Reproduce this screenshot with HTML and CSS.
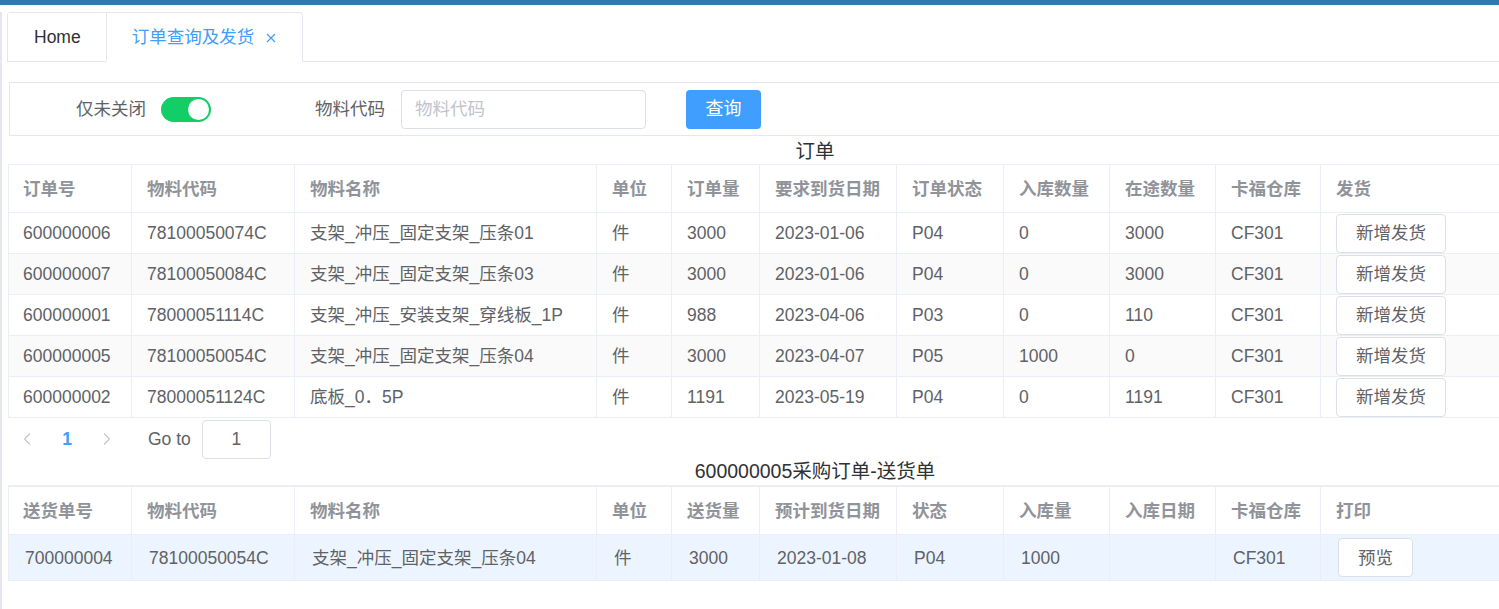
FILE: index.html
```html
<!DOCTYPE html>
<html lang="zh-CN">
<head>
<meta charset="utf-8">
<title>订单查询及发货</title>
<link rel="stylesheet" href="styles.css">
</head>
<body>
<div class="topbar"></div>
<div class="page">
  <div class="tabs">
    <div class="tab-nav">
      <div class="tab">Home</div>
      <div class="tab active">订单查询及发货<svg class="close" width="10" height="10" viewBox="0 0 10 10"><path d="M1 1 L9 9 M9 1 L1 9" stroke="#409eff" stroke-width="1.2" fill="none"/></svg></div>
    </div>
  </div>

  <div class="filter">
    <span class="label first">仅未关闭</span>
    <span class="switch"><span class="knob"></span></span>
    <span class="label second">物料代码</span>
    <span class="input">物料代码</span>
    <span class="btn-primary">查询</span>
  </div>

  <div class="title">订单</div>
  <table class="grid">
    <colgroup>
      <col class="c1"><col class="c2"><col class="c3"><col class="c4"><col class="c5"><col class="c6"><col class="c7"><col class="c8"><col class="c9"><col class="c10"><col class="c11">
    </colgroup>
    <thead>
      <tr><th>订单号</th><th>物料代码</th><th>物料名称</th><th>单位</th><th>订单量</th><th>要求到货日期</th><th>订单状态</th><th>入库数量</th><th>在途数量</th><th>卡福仓库</th><th>发货</th></tr>
    </thead>
    <tbody>
      <tr><td>600000006</td><td>78100050074C</td><td>支架_冲压_固定支架_压条01</td><td>件</td><td>3000</td><td>2023-01-06</td><td>P04</td><td>0</td><td>3000</td><td>CF301</td><td><span class="btn">新增发货</span></td></tr>
      <tr class="stripe"><td>600000007</td><td>78100050084C</td><td>支架_冲压_固定支架_压条03</td><td>件</td><td>3000</td><td>2023-01-06</td><td>P04</td><td>0</td><td>3000</td><td>CF301</td><td><span class="btn">新增发货</span></td></tr>
      <tr><td>600000001</td><td>78000051114C</td><td>支架_冲压_安装支架_穿线板_1P</td><td>件</td><td>988</td><td>2023-04-06</td><td>P03</td><td>0</td><td>110</td><td>CF301</td><td><span class="btn">新增发货</span></td></tr>
      <tr class="stripe"><td>600000005</td><td>78100050054C</td><td>支架_冲压_固定支架_压条04</td><td>件</td><td>3000</td><td>2023-04-07</td><td>P05</td><td>1000</td><td>0</td><td>CF301</td><td><span class="btn">新增发货</span></td></tr>
      <tr><td>600000002</td><td>78000051124C</td><td>底板_0．5P</td><td>件</td><td>1191</td><td>2023-05-19</td><td>P04</td><td>0</td><td>1191</td><td>CF301</td><td><span class="btn">新增发货</span></td></tr>
    </tbody>
  </table>

  <div class="pager">
    <span class="pg-btn"><svg width="8" height="12" viewBox="0 0 8 12"><path d="M7 0.5 L1.5 6 L7 11.5" stroke="#c0c4cc" stroke-width="1.1" fill="none"/></svg></span>
    <span class="pg-btn pg-num">1</span>
    <span class="pg-btn"><svg width="8" height="12" viewBox="0 0 8 12"><path d="M1 0.5 L6.5 6 L1 11.5" stroke="#c0c4cc" stroke-width="1.1" fill="none"/></svg></span>
    <span class="goto">Go to</span>
    <span class="goto-input">1</span>
  </div>

  <div class="title title2">600000005采购订单-送货单</div>
  <table class="grid grid2">
    <colgroup>
      <col class="c1"><col class="c2"><col class="c3"><col class="c4"><col class="c5"><col class="c6"><col class="c7"><col class="c8"><col class="c9"><col class="c10"><col class="c11">
    </colgroup>
    <thead>
      <tr><th>送货单号</th><th>物料代码</th><th>物料名称</th><th>单位</th><th>送货量</th><th>预计到货日期</th><th>状态</th><th>入库量</th><th>入库日期</th><th>卡福仓库</th><th>打印</th></tr>
    </thead>
    <tbody>
      <tr class="current"><td>700000004</td><td>78100050054C</td><td>支架_冲压_固定支架_压条04</td><td>件</td><td>3000</td><td>2023-01-08</td><td>P04</td><td>1000</td><td></td><td>CF301</td><td><span class="btn btn-small">预览</span></td></tr>
    </tbody>
  </table>
</div>
</body>
</html>
```

FILE: styles.css
```css
html, body {
  margin: 0;
  padding: 0;
  background: #fff;
  overflow: hidden;
}
body {
  font-family: "Liberation Sans", "Noto Sans CJK SC", sans-serif;
  font-size: 17.5px;
  line-height: 20px;
  color: #606266;
  width: 1499px;
  height: 609px;
}
.topbar {
  height: 5px;
  background: #317aa9;
}
.page {
  border-left: 2px solid #e4e7ed;
  padding-left: 5px;
  height: 604px;
  box-sizing: border-box;
}

/* tabs */
.tabs {
  margin-top: 7px;
  display: flex;
  border-bottom: 1px solid #e4e7ed;
  height: 49px;
  margin-right: -10px;
}
.tab-nav {
  display: flex;
  border: 1px solid #e4e7ed;
  border-bottom: none;
  border-radius: 4px 4px 0 0;
  height: 49px;
  box-sizing: border-box;
}
.tab {
  height: 47px;
  padding: 0 25px 0 26px;
  color: #303133;
  background: #fff;
  display: flex;
  align-items: center;
  white-space: nowrap;
}
.tab.active {
  border-left: 1px solid #e4e7ed;
  border-bottom: 2px solid #fff;
  border-radius: 0 4px 0 0;
  color: #409eff;
  padding: 0 26px 0 25px;
}
.close {
  margin-left: 12px;
  margin-top: 2px;
}

/* filter */
.filter {
  margin-top: 20px;
  margin-left: 2px;
  width: 1614px;
  height: 54px;
  box-sizing: border-box;
  border: 1px solid #e4e7ed;
  display: flex;
  align-items: center;
  padding-left: 66px;
}
.label {
  color: #606266;
  white-space: nowrap;
}
.label.first {
  width: 70px;
}
.switch {
  margin-left: 15px;
  width: 50px;
  height: 25px;
  border-radius: 13px;
  background: #13ce66;
  display: flex;
  align-items: center;
  justify-content: flex-end;
  padding-right: 2px;
  box-sizing: border-box;
}
.knob {
  width: 21px;
  height: 21px;
  border-radius: 50%;
  background: #fff;
}
.label.second {
  margin-left: 104px;
  width: 72px;
}
.input {
  margin-left: 14px;
  width: 245px;
  height: 39px;
  box-sizing: border-box;
  border: 1px solid #dcdfe6;
  border-radius: 4px;
  color: #c0c4cc;
  display: flex;
  align-items: center;
  padding-left: 13px;
}
.btn-primary {
  margin-left: 40px;
  width: 75px;
  height: 39px;
  border-radius: 4px;
  background: #409eff;
  color: #fff;
  display: flex;
  align-items: center;
  justify-content: center;
  font-size: 18px;
}

/* titles */
.title {
  width: 1614px;
  text-align: center;
  color: #303133;
  font-size: 19.5px;
  height: 28px;
  line-height: 30px;
  margin-left: 1px;
}
.title2 {
  height: 26px;
  line-height: 25px;
}

/* tables */
.grid {
  margin-left: 1px;
  width: 1614px;
  table-layout: fixed;
  border-collapse: collapse;
  border-left: 1px solid #ebeef5;
  border-top: 1px solid #ebeef5;
}
.c1 { width: 123px; }
.c2 { width: 163px; }
.c3 { width: 302px; }
.c4 { width: 75px; }
.c5 { width: 88px; }
.c6 { width: 137px; }
.c7 { width: 107px; }
.c8 { width: 106px; }
.c9 { width: 106px; }
.c10 { width: 105px; }
.c11 { width: 302px; }
.grid th, .grid td {
  border-right: 1px solid #ebeef5;
  border-bottom: 1px solid #ebeef5;
  padding: 0 15px;
  line-height: 20px;
  text-align: left;
  white-space: nowrap;
  overflow: hidden;
  vertical-align: middle;
}
.grid th:first-child, .grid td:first-child {
  padding-left: 14px;
}
.grid th {
  height: 47px;
  color: #909399;
  font-weight: bold;
}
.grid td {
  height: 40px;
  color: #606266;
}
.grid tr.stripe td {
  background: #fafafa;
}
.btn {
  display: inline-flex;
  align-items: center;
  justify-content: center;
  height: 39px;
  box-sizing: border-box;
  padding: 0 19px;
  border: 1px solid #dcdfe6;
  border-radius: 4px;
  background: #fff;
  color: #606266;
  vertical-align: middle;
}
.grid2 {
  border-top: 2px solid #ebeef5;
}
.grid2 td {
  height: 45px;
  padding-left: 17px;
}
.grid2 td:first-child {
  padding-left: 16px;
}
.grid2 tr.current td {
  background: #ecf5ff;
}

/* pager */
.pager {
  display: flex;
  align-items: center;
  height: 40px;
  margin-top: 1px;
}
.pg-btn {
  width: 40px;
  display: flex;
  align-items: center;
  justify-content: center;
}
.pg-num {
  color: #409eff;
  font-weight: bold;
}
.goto {
  margin-left: 21px;
  color: #606266;
}
.goto-input {
  margin-left: 11px;
  width: 69px;
  height: 39px;
  box-sizing: border-box;
  border: 1px solid #dcdfe6;
  border-radius: 4px;
  display: flex;
  align-items: center;
  justify-content: center;
  color: #606266;
}
```
